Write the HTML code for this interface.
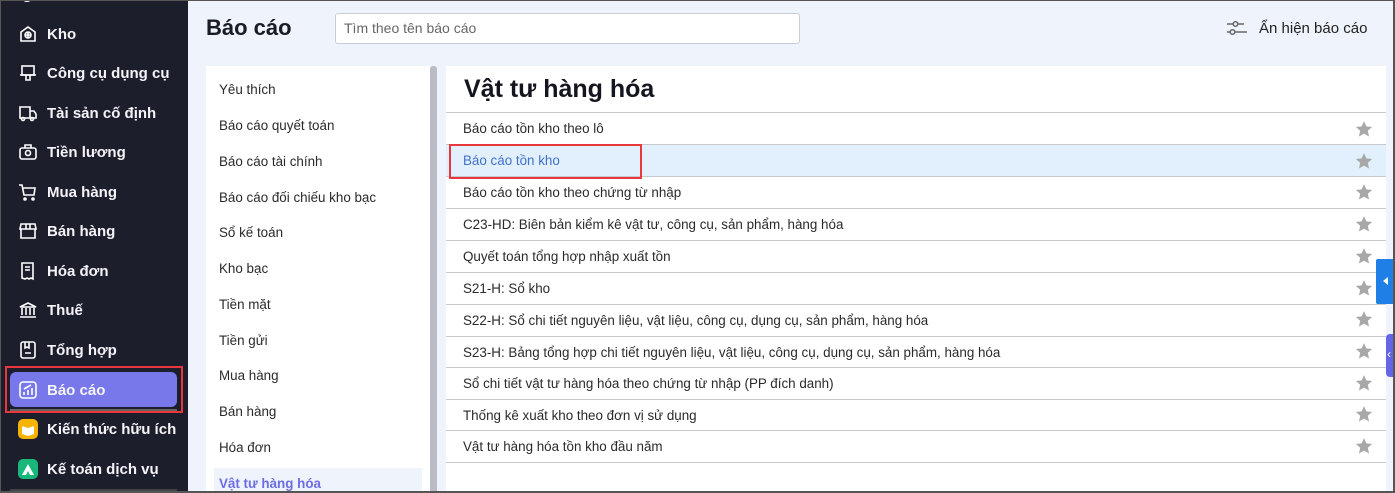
<!DOCTYPE html>
<html><head><meta charset="utf-8"><style>
*{box-sizing:border-box;margin:0;padding:0}
body{width:1395px;height:493px;overflow:hidden;font-family:"Liberation Sans",sans-serif;background:#eef3fc;position:relative}
.frame{position:absolute;inset:0;border:1px solid #555;border-right:2px solid #555;border-bottom:2px solid #555;pointer-events:none;z-index:20}
.side{position:absolute;left:0;top:0;width:188px;height:493px;background:#1d1e2c;color:#fff}
.si{position:absolute;left:18px;height:24px;display:flex;align-items:center;font-size:15px;font-weight:bold;color:#f4f4f8}
.si svg{width:20px;height:20px;margin-right:9px;flex:none}
.act{position:absolute;left:10px;top:372px;width:167px;height:35px;background:#7878ea;border-radius:6px}
.red{position:absolute;border:2px solid #e8383d}
.h1{position:absolute;left:206px;top:15px;font-size:22px;font-weight:bold;color:#1b1b22}
.search{position:absolute;left:335px;top:13px;width:465px;height:31px;background:#fff;border:1px solid #c9ccd3;border-radius:3px;font-size:14px;color:#666;padding:6px 8px}
.toggle{position:absolute;left:1226px;top:19px;font-size:15px;color:#222;display:flex;align-items:center}
.left{position:absolute;left:206px;top:66px;width:224px;height:427px;background:#fff}
.scroll{position:absolute;left:430px;top:66px;width:7px;height:427px;background:#b9bcc4;border-radius:3px 3px 0 0}
.li{position:absolute;left:13px;font-size:13.4px;color:#2a2a2a}
.right{position:absolute;left:446px;top:66px;width:940px;height:427px;background:#fff}
.t2{position:absolute;left:18px;top:9px;font-size:25px;font-weight:bold;color:#151520}
.row{position:absolute;left:0;width:940px;height:32px;border-top:1px solid #c7c9cf;font-size:13.4px;color:#2a2a2a;padding:8px 17px}
</style></head><body>
<div class="side">
 <div class="act"></div>
 <div style="position:absolute;left:10px;top:409px;width:167px;height:2px;background:#666"></div>
 <div style="position:absolute;left:10px;top:489px;width:167px;height:2px;background:#444"></div>
 <div style="position:absolute;left:22px;top:-6px;width:10px;height:8px;border:1.5px solid #fff;border-radius:50%"></div>
 <div class="si" style="top:22px"><svg viewBox="0 0 20 20" fill="none" stroke="#fff" stroke-width="1.6"><path d="M3 8l7-5 7 5v9H3z"/><circle cx="10" cy="11" r="3"/><path d="M10 8v6M7 11h6"/></svg>Kho</div>
 <div class="si" style="top:61px"><svg viewBox="0 0 20 20" fill="none" stroke="#fff" stroke-width="1.6"><rect x="4" y="3" width="12" height="9"/><path d="M2 12h16M8 12v5h4v-5"/></svg>Công cụ dụng cụ</div>
 <div class="si" style="top:101px"><svg viewBox="0 0 20 20" fill="none" stroke="#fff" stroke-width="1.6"><path d="M2 4h10v11H2zM12 8h4l2 3v4h-6"/><circle cx="5" cy="16" r="1.5"/><circle cx="14" cy="16" r="1.5"/></svg>Tài sản cố định</div>
 <div class="si" style="top:140px"><svg viewBox="0 0 20 20" fill="none" stroke="#fff" stroke-width="1.6"><rect x="2" y="6" width="16" height="11" rx="2"/><path d="M7 6V3h6v3"/><circle cx="10" cy="11" r="2.5"/></svg>Tiền lương</div>
 <div class="si" style="top:180px"><svg viewBox="0 0 20 20" fill="none" stroke="#fff" stroke-width="1.6"><path d="M1 3h3l2 10h10l1-7H5"/><circle cx="7" cy="17" r="1"/><circle cx="15" cy="17" r="1"/></svg>Mua hàng</div>
 <div class="si" style="top:219px"><svg viewBox="0 0 20 20" fill="none" stroke="#fff" stroke-width="1.6"><path d="M3 3h14l1 5H2zM3 8v9h14V8M8 3v5M12 3v5"/></svg>Bán hàng</div>
 <div class="si" style="top:259px"><svg viewBox="0 0 20 20" fill="none" stroke="#fff" stroke-width="1.6"><path d="M4 2h11v16l-2-1-2 1-2-1-2 1-3-1z"/><path d="M7 6h5M7 9h5"/></svg>Hóa đơn</div>
 <div class="si" style="top:298px"><svg viewBox="0 0 20 20" fill="none" stroke="#fff" stroke-width="1.6"><path d="M2 7l8-4 8 4zM4 8v7M8 8v7M12 8v7M16 8v7M2 17h16"/></svg>Thuế</div>
 <div class="si" style="top:338px"><svg viewBox="0 0 20 20" fill="none" stroke="#fff" stroke-width="1.6"><rect x="3" y="2" width="14" height="16" rx="2"/><path d="M7 2v6l2-1 2 1V2M7 13h6"/></svg>Tổng hợp</div>
 <div class="si" style="top:378px"><svg viewBox="0 0 20 20" fill="none" stroke="#fff" stroke-width="1.6"><rect x="2" y="2" width="16" height="16" rx="3"/><path d="M6 15v-3M10 15v-5M14 15V8M6 9l7-4"/></svg>Báo cáo</div>
 <div class="si" style="top:417px"><svg viewBox="0 0 20 20"><rect width="20" height="20" rx="5" fill="#f5b400"/><path d="M4 7l6 2 6-2v8l-6 2-6-2z" fill="#fff"/></svg>Kiến thức hữu ích</div>
 <div class="si" style="top:457px"><svg viewBox="0 0 20 20"><rect width="20" height="20" rx="5" fill="#19b779"/><path d="M4 16l6-11 6 11h-4l-2-4-2 4z" fill="#fff"/></svg>Kế toán dịch vụ</div>
</div>
<div class="red" style="left:5px;top:366px;width:178px;height:47px"></div>
<div class="h1">Báo cáo</div>
<div class="search">Tìm theo tên báo cáo</div>
<div class="toggle"><svg width="22" height="18" viewBox="0 0 22 18" fill="none" stroke="#666" stroke-width="1.5"><path d="M1 5h6M12 5h6M1 13h3M9 13h12"/><circle cx="9.5" cy="5" r="2.3"/><circle cx="6.5" cy="13" r="2.3"/></svg><span style="margin-left:11px">Ẩn hiện báo cáo</span></div>
<div class="left">
 <div class="li" style="top:16px">Yêu thích</div>
 <div class="li" style="top:52px">Báo cáo quyết toán</div>
 <div class="li" style="top:88px">Báo cáo tài chính</div>
 <div class="li" style="top:124px">Báo cáo đối chiếu kho bạc</div>
 <div class="li" style="top:159px">Sổ kế toán</div>
 <div class="li" style="top:195px">Kho bạc</div>
 <div class="li" style="top:231px">Tiền mặt</div>
 <div class="li" style="top:267px">Tiền gửi</div>
 <div class="li" style="top:302px">Mua hàng</div>
 <div class="li" style="top:338px">Bán hàng</div>
 <div class="li" style="top:374px">Hóa đơn</div>
 <div style="position:absolute;left:8px;top:402px;width:208px;height:25px;background:#eef3fc"></div>
 <div class="li" style="top:410px;color:#6d6de3;font-weight:bold">Vật tư hàng hóa</div>
</div>
<div class="scroll"></div>
<div class="right">
 <div class="t2">Vật tư hàng hóa</div>
 <div class="row" style="top:46px">Báo cáo tồn kho theo lô</div>
 <div class="row" style="top:78px;background:#e2f0fd;color:#3f72c7">Báo cáo tồn kho</div>
 <div class="row" style="top:110px">Báo cáo tồn kho theo chứng từ nhập</div>
 <div class="row" style="top:142px">C23-HD: Biên bản kiểm kê vật tư, công cụ, sản phẩm, hàng hóa</div>
 <div class="row" style="top:174px">Quyết toán tổng hợp nhập xuất tồn</div>
 <div class="row" style="top:206px">S21-H: Sổ kho</div>
 <div class="row" style="top:238px">S22-H: Sổ chi tiết nguyên liệu, vật liệu, công cụ, dụng cụ, sản phẩm, hàng hóa</div>
 <div class="row" style="top:270px">S23-H: Bảng tổng hợp chi tiết nguyên liệu, vật liệu, công cụ, dụng cụ, sản phẩm, hàng hóa</div>
 <div class="row" style="top:301px">Sổ chi tiết vật tư hàng hóa theo chứng từ nhập (PP đích danh)</div>
 <div class="row" style="top:333px">Thống kê xuất kho theo đơn vị sử dụng</div>
 <div class="row" style="top:364px">Vật tư hàng hóa tồn kho đầu năm</div>
 <div style="position:absolute;left:0;top:396px;width:940px;border-top:1px solid #c7c9cf"></div>
</div>
<div id="stars"></div>
<div class="red" style="left:449px;top:144px;width:193px;height:35px"></div>
<div style="position:absolute;left:1376px;top:259px;width:19px;height:45px;background:#1f7fe6;border-radius:2px 0 0 2px"><div style="position:absolute;left:7px;top:18px;border-right:5px solid #fff;border-top:4px solid transparent;border-bottom:4px solid transparent"></div></div>
<div style="position:absolute;left:1386px;top:334px;width:9px;height:43px;background:#6464e6;border-radius:4px 0 0 4px;color:#fff;font-size:12px;padding:13px 0 0 1px">‹</div>
<div class="frame"></div>
<script>
var ys=[129,161,192,224,256,288,319,351,383,414,446],h='';
ys.forEach(function(y){h+='<svg style="position:absolute;left:1355px;top:'+(y-9)+'px" width="18" height="18" viewBox="0 0 24 24"><path fill="#a8a8a8" d="M12 1.5l3.2 7 7.6.8-5.7 5.1 1.6 7.6L12 18.1 5.3 22l1.6-7.6L1.2 9.3l7.6-.8z"/></svg>'});
document.getElementById('stars').innerHTML=h;
</script>
</body></html>
